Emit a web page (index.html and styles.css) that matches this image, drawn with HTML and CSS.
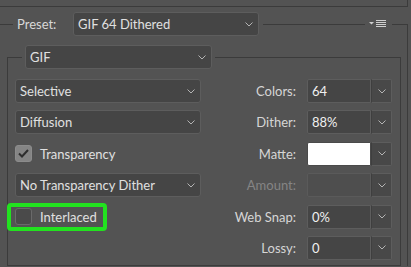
FILE: index.html
```html
<!DOCTYPE html>
<html lang="en">
<head>
    <meta charset="UTF-8">
    <title>Save for Web - GIF</title>
    <link rel="stylesheet" href="styles.css">
</head>
<body>
    <div class="top-edge"></div>

    <fieldset class="outer">
        <legend class="outer-legend">
            <div class="head">
                <span class="head-label">Preset:</span>
                <div class="select preset">
                    <span>GIF 64 Dithered</span>
                    <svg class="chev" width="8" height="5" viewBox="0 0 8 5"><path d="M0.5 0.5 L4 4 L7.5 0.5"/></svg>
                </div>
                <span class="rule"></span>
                <svg class="menu-icon" width="18" height="9" viewBox="0 0 18 9">
                    <polygon points="0,2 5,2 2.5,4.5"/>
                    <rect x="7" y="0" width="10" height="1"/>
                    <rect x="7" y="2" width="10" height="1"/>
                    <rect x="7" y="4" width="10" height="1"/>
                    <rect x="7" y="6" width="10" height="1"/>
                </svg>
            </div>
        </legend>

        <fieldset class="inner">
            <legend class="inner-legend">
                <div class="select format">
                    <span>GIF</span>
                    <svg class="chev" width="8" height="5" viewBox="0 0 8 5"><path d="M0.5 0.5 L4 4 L7.5 0.5"/></svg>
                </div>
            </legend>

            <div class="opts">
                <div class="select">
                    <span>Selective</span>
                    <svg class="chev" width="8" height="5" viewBox="0 0 8 5"><path d="M0.5 0.5 L4 4 L7.5 0.5"/></svg>
                </div>
                <span class="lbl">Colors:</span>
                <div class="combo">
                    <span class="value">64</span>
                    <span class="btn"><svg class="chev" width="8" height="5" viewBox="0 0 8 5"><path d="M0.5 0.5 L4 4 L7.5 0.5"/></svg></span>
                </div>

                <div class="select">
                    <span>Diffusion</span>
                    <svg class="chev" width="8" height="5" viewBox="0 0 8 5"><path d="M0.5 0.5 L4 4 L7.5 0.5"/></svg>
                </div>
                <span class="lbl">Dither:</span>
                <div class="combo">
                    <span class="value">88%</span>
                    <span class="btn"><svg class="chev" width="8" height="5" viewBox="0 0 8 5"><path d="M0.5 0.5 L4 4 L7.5 0.5"/></svg></span>
                </div>

                <label class="check">
                    <span class="box checked">
                        <svg width="11" height="9" viewBox="0 0 11 9"><path d="M1 4.5 L4 7.5 L10 1"/></svg>
                    </span>
                    <span>Transparency</span>
                </label>
                <span class="lbl">Matte:</span>
                <div class="combo">
                    <span class="value matte"></span>
                    <span class="btn"><svg class="chev" width="8" height="5" viewBox="0 0 8 5"><path d="M0.5 0.5 L4 4 L7.5 0.5"/></svg></span>
                </div>

                <div class="select">
                    <span>No Transparency Dither</span>
                    <svg class="chev" width="8" height="5" viewBox="0 0 8 5"><path d="M0.5 0.5 L4 4 L7.5 0.5"/></svg>
                </div>
                <span class="lbl disabled">Amount:</span>
                <div class="combo">
                    <span class="value off"></span>
                    <span class="btn"><svg class="chev" width="8" height="5" viewBox="0 0 8 5"><path d="M0.5 0.5 L4 4 L7.5 0.5"/></svg></span>
                </div>

                <label class="check highlight">
                    <span class="box"></span>
                    <span>Interlaced</span>
                </label>
                <span class="lbl">Web Snap:</span>
                <div class="combo">
                    <span class="value">0%</span>
                    <span class="btn"><svg class="chev" width="8" height="5" viewBox="0 0 8 5"><path d="M0.5 0.5 L4 4 L7.5 0.5"/></svg></span>
                </div>

                <span class="lbl col-2">Lossy:</span>
                <div class="combo">
                    <span class="value">0</span>
                    <span class="btn"><svg class="chev" width="8" height="5" viewBox="0 0 8 5"><path d="M0.5 0.5 L4 4 L7.5 0.5"/></svg></span>
                </div>
            </div>
        </fieldset>
    </fieldset>
</body>
</html>
```

FILE: styles.css
```css
body {
    margin: 0;
    background-color: #535353;
    font-family: Lato, "Noto Sans", sans-serif;
    font-size: 13px;
    color: #e0e0e0;
    overflow: hidden;
}

.top-edge {
    width: 408px;
    height: 7px;
    box-sizing: border-box;
    border-bottom: 1px solid #3b3b3b;
    border-right: 1px solid #3b3b3b;
}

fieldset {
    margin: 0;
    min-width: 0;
}

legend {
    padding: 0;
}

.outer {
    margin-top: 5px;
    padding: 0;
    width: 408px;
    box-sizing: border-box;
    border: 0;
    border-top: 1px solid #3b3b3b;
    border-right: 1px solid #3b3b3b;
}

.outer-legend {
    margin-left: 13px;
    width: 379px;
    box-sizing: border-box;
    padding: 0 5px 0 4px;
}

.head {
    display: flex;
    align-items: center;
    height: 24px;
}

.head-label {
    width: 56px;
    color: #d8d8d8;
}

.rule {
    flex: 1;
    height: 1px;
    margin: 0 4px;
    background-color: #3b3b3b;
}

.menu-icon {
    fill: #cfcfcf;
}

.select {
    display: flex;
    align-items: center;
    justify-content: space-between;
    height: 24px;
    box-sizing: border-box;
    padding: 0 5px 0 4px;
    background-color: #454545;
    border: 1px solid #5d5d5d;
    border-radius: 3px;
    white-space: nowrap;
}

.preset {
    width: 186px;
}

.chev {
    fill: none;
    stroke: #b4b4b4;
    stroke-width: 1;
}

.inner {
    margin: 9px 0 0 7px;
    width: 394px;
    box-sizing: border-box;
    padding: 10px 8px 5px 7px;
    border: 1px solid #3b3b3b;
}

.inner-legend {
    margin-left: 7px;
    padding: 0 3px;
}

.format {
    width: 187px;
}

.opts {
    display: grid;
    grid-template-columns: 186px 1fr 85px;
    column-gap: 11px;
    grid-auto-rows: 24px;
    row-gap: 7.4px;
    align-items: center;
}

.lbl {
    text-align: right;
    color: #d6d6d6;
}

.lbl.disabled {
    color: #858585;
}

.col-2 {
    grid-column: 2;
}

.combo {
    display: flex;
    height: 24px;
}

.value {
    width: 64px;
    box-sizing: border-box;
    padding: 0 4px;
    line-height: 22px;
    background-color: #454545;
    border: 1px solid #5d5d5d;
    border-radius: 2px 0 0 2px;
    color: #f0f0f0;
}

.value.matte {
    background-color: #fff;
    border-color: #4a4a4a;
}

.value.off {
    background-color: #4e4e4e;
    border-color: #5a5a5a;
}

.btn {
    display: flex;
    align-items: center;
    justify-content: center;
    width: 21px;
    box-sizing: border-box;
    background-color: #484848;
    border: 1px solid #5d5d5d;
    border-left-color: #3f3f3f;
    border-radius: 0 2px 2px 0;
}

.check {
    position: relative;
    display: flex;
    align-items: center;
    gap: 8px;
    width: max-content;
}

.box {
    display: flex;
    align-items: center;
    justify-content: center;
    width: 17px;
    height: 17px;
    box-sizing: border-box;
    border: 1px solid #6a6a6a;
    border-radius: 3px;
    background-color: #4a4a4a;
}

.box.checked {
    background-color: #858585;
    border-color: #8c8c8c;
}

.box svg {
    fill: none;
    stroke: #2e2e2e;
    stroke-width: 2;
}

.highlight::after {
    content: "";
    position: absolute;
    top: -5px;
    bottom: -6px;
    left: -8px;
    right: -10px;
    border: 4px solid #22e21f;
    border-radius: 4px;
}
```
